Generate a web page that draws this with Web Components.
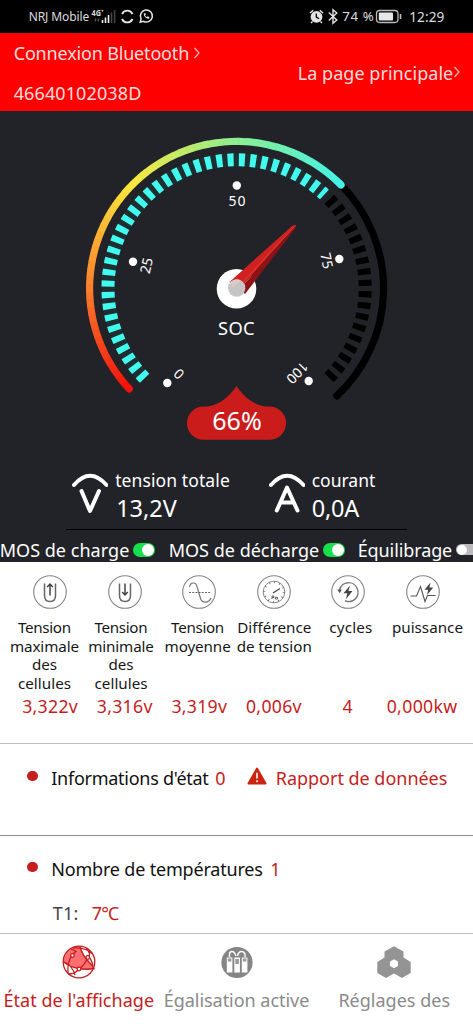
<!DOCTYPE html>
<html lang="fr">
<head>
<meta charset="utf-8">
<title>BMS</title>
<style>
html,body{margin:0;padding:0;background:#fff}
body{width:473px;height:1024px;overflow:hidden;font-family:"Noto Sans","Liberation Sans",sans-serif}
</style>
</head>
<body>
<bms-app></bms-app>
<script>
const define = (name, html, init) => {
  const tpl = document.createElement('template');
  tpl.innerHTML = html;
  customElements.define(name, class extends HTMLElement {
    connectedCallback() {
      if (this.shadowRoot) return;
      this.attachShadow({mode: 'open'}).appendChild(tpl.content.cloneNode(true));
      if (init) init(this, this.shadowRoot);
    }
  });
};

/* Single line of text, spaced to fill the width given in "w". */
define('fit-text', `<style>
:host{display:block;flex:none;white-space:nowrap;box-sizing:border-box;padding-left:.7px}
span{display:inline-block}
</style><span><slot></slot></span>`, (el, root) => {
  const w = +el.getAttribute('w'), s = +el.getAttribute('s') || 18;
  el.style.width = w + 'px';
  el.style.fontSize = s + 'px';
  const span = root.querySelector('span');
  const n = el.textContent.length;
  const natural = span.getBoundingClientRect().width;
  if (n > 1) span.style.letterSpacing = ((w - 1.4 - natural) / (n - 1)).toFixed(3) + 'px';
});

define('status-bar', `<style>
:host{display:flex;height:33px;box-sizing:border-box;background:#000;color:#ddd;align-items:center;padding:0 28px;line-height:33px}
svg{flex:none;display:block}
.sp{flex:1}
</style>
<fit-text w="62" s="12">NRJ Mobile</fit-text>
<svg width="66" height="33" viewBox="90 0 66 33">
 <text x="91.500" y="16" font-size="8" font-weight="700" fill="#ddd" textLength="12" lengthAdjust="spacingAndGlyphs">4G⁺</text>
 <path d="M95.500 18.500v3M98.500 18.500v3" stroke="#555" stroke-width="1.500"/>
 <path d="M102.500 20v3M105.500 17.500v5.500M108.500 15v8" stroke="#eee" stroke-width="1.600"/>
 <path d="M111.500 12.500v10.500M114.600 10v13" stroke="#444" stroke-width="1.600"/>
 <path d="M122 14a5.800 5.800 0 0 1 10.500 0M122 19a5.800 5.800 0 0 0 10.500 0" fill="none" stroke="#e4e4e4" stroke-width="1.900"/>
 <path d="M140.200 22.200l.9-3.300a6 6 0 1 1 2.400 2.400z" fill="none" stroke="#e4e4e4" stroke-width="1.500"/>
 <path d="M144.200 13.300c-1.800 1.500 2.200 6.400 4.900 5.400l.4-1.500-1.800-.9-.8.8q-1.300-.5-1.800-1.900l.7-.7-.6-1.600z" fill="#e4e4e4"/>
</svg>
<div class="sp"></div>
<svg width="33" height="33" viewBox="308.500 0 33 33">
 <path d="M309.500 13l3.200-2.800M322.500 13l-3.200-2.800M312 21.500l-1.500 1.500M320 21.500l1.500 1.500" stroke="#e4e4e4" stroke-width="1.500"/>
 <circle cx="316" cy="16.800" r="5.900" fill="#e4e4e4"/>
 <path d="M315.800 13.500v3.600l2.800 1.600" fill="none" stroke="#000" stroke-width="1.300"/>
 <path d="M328.300 12.500l8 7.500-3.800 3.200V9.800l3.800 3.200-8 7.500" fill="none" stroke="#e4e4e4" stroke-width="1.400"/>
</svg>
<fit-text w="33" s="13.200">74 %</fit-text>
<svg width="34" height="33" viewBox="375.500 0 34 33">
 <rect x="377" y="10.500" width="21.500" height="12" rx="3.200" fill="none" stroke="#bbb" stroke-width="1.300"/>
 <rect x="379.300" y="12.600" width="14.200" height="7.900" rx="1" fill="#e8e8e8"/>
 <path d="M401 14v5" stroke="#bbb" stroke-width="1.600"/>
</svg>
<fit-text w="36.500" s="13.600">12:29</fit-text>`);

define('chevron-icon', `<style>:host{display:block;flex:none;height:12px}svg{display:block}</style>
<svg width="8" height="12"><path d="M1.500 1l4.500 5-4.500 5" fill="none" stroke="#ffb4b4" stroke-width="1.300"/></svg>`);

define('page-header', `<style>
:host{display:flex;height:78px;background:#f00;color:#ffdede;justify-content:space-between;line-height:39px;padding:0 12px 0 13px}
.left{display:grid;grid-template-rows:41px 38px}
.row{display:flex;align-items:center}
.row chevron-icon{margin:-2px 0 0 3px}
</style>
<div class="left"><div class="row"><fit-text w="177">Connexion Bluetooth</fit-text><chevron-icon></chevron-icon></div>
<div class="row"><fit-text w="129">46640102038D</fit-text></div></div>
<div class="row" style="padding-top:2px"><fit-text w="157">La page principale</fit-text><chevron-icon style="margin-left:-1px"></chevron-icon></div>`);

define('soc-gauge', `<style>:host{display:block;height:350px}svg{display:block}text{fill:#fff;text-anchor:middle}</style>
<svg width="473" height="350" viewBox="0 111 473 350">
 <g id="arc" fill="none" stroke-width="7.200"></g>
 <g id="ticks" fill="none" stroke-width="13"></g>
 <g fill="#fff"><circle cx="167.300" cy="383" r="4.200"/><circle cx="133" cy="261.700" r="4.200"/><circle cx="236.800" cy="185.500" r="4.200"/><circle cx="339.300" cy="259" r="4.200"/><circle cx="308.700" cy="381" r="4.200"/></g>
 <g font-size="14">
 <text transform="translate(179 374) rotate(-135)" y="5">0</text>
 <text transform="translate(146.500 265.500) rotate(-77)" y="5">25</text>
 <text x="237" y="206" textLength="17">50</text>
 <text transform="translate(326.700 260.700) rotate(78)" y="5">75</text>
 <text transform="translate(297.300 372.900) rotate(135)" y="5">100</text></g>
 <circle cx="236.500" cy="288.800" r="19.800" fill="#fff"/>
 <path d="M229.500 282L291.500 226.500Q295 224 296 225L240 289z" fill="#d02020"/>
 <path d="M240 289L296 225Q296.500 226.500 294.500 229.500L245 294z" fill="#8e1216"/>
 <path d="M240 285L295.500 225.500" stroke="#e24a40" stroke-width=".8"/>
 <circle cx="236.700" cy="288" r="8.700" fill="#c6c4c4"/><path d="M229 284a8.700 8.700 0 0 1 12-3.500l-8 7z" fill="#e3cccc" opacity=".7"/>
 <text x="236.300" y="335.300" font-size="18.300" textLength="36.500">SOC</text>
 <path d="M203.500 439.800a16.600 16.600 0 0 1 0-33.200C218 407 230 396 236.500 386C243 396 255 407 269.500 406.600a16.600 16.600 0 0 1 0 33.200z" fill="#cb1c1c"/>
 <text x="237" y="430.300" font-size="25.500" textLength="49.500" lengthAdjust="spacingAndGlyphs">66%</text>
</svg>`, (el, root) => {
  const cx = 236.6, cy = 288.4, NS = 'http://www.w3.org/2000/svg';
  const pt = (a, r) => {
    const t = a * Math.PI / 180;
    return (cx + r * Math.sin(t)).toFixed(2) + ' ' + (cy - r * Math.cos(t)).toFixed(2);
  };
  const arc = (g, a, b, r, color, cap) => {
    const p = document.createElementNS(NS, 'path');
    p.setAttribute('d', `M${pt(a, r)}A${r} ${r} 0 ${b - a > 180 ? 1 : 0} 1 ${pt(b, r)}`);
    p.setAttribute('stroke', color);
    if (cap) p.setAttribute('stroke-linecap', 'round');
    g.appendChild(p);
  };
  const stops = [[0,[245,18,12]],[.24,[250,128,44]],[.49,[253,231,60]],[.745,[142,238,144]],[1,[69,243,230]]];
  const mix = t => {
    let i = 0;
    while (i < stops.length - 2 && t > stops[i + 1][0]) i++;
    const [t0, c0] = stops[i], [t1, c1] = stops[i + 1], k = (t - t0) / (t1 - t0);
    return `rgb(${c0.map((v, j) => Math.round(v + (c1[j] - v) * k))})`;
  };
  const g = root.getElementById('arc'), start = 226.9, end = 405.3, N = 60;
  arc(g, end, 497, 147, '#000', true);
  arc(g, start, start + .5, 147, mix(0), true);
  arc(g, end - .5, end, 147, mix(1), true);
  for (let i = 0; i < N; i++) {
    const step = (end - start) / N, a = start + i * step;
    arc(g, a, a + step + (i < N - 1 ? .2 : 0), 147, mix(i / (N - 1)));
  }
  const k = root.getElementById('ticks');
  arc(k, 225.6, 403.7, 128.4, '#202d31');
  for (let i = 0; i < 54; i++) {
    const a = 227 + i * 5.013;
    arc(k, a - 1.35, a + (i === 35 ? .6 : 1.35), 128.6, i < 36 ? '#40fbee' : '#000');
  }
});

define('toggle-switch', `<style>
:host{display:block;flex:none;width:22px;height:14px;border-radius:7px;background:#18df4c;box-sizing:border-box;padding:1px}
:host([off]){background:#bdb9bd;width:22px;height:11px;padding:.5px}
i{display:block;width:12px;height:12px;border-radius:50%;background:#fff;margin-left:auto}
:host([off]) i{margin-left:0;width:10px;height:10px}
</style><i></i>`);

define('live-reading', `<style>
:host{display:flex}
svg{display:block;flex:none}
.t{display:grid;grid-template-rows:24px 30px;margin:-1px 0 0 6.500px}
::slotted([slot=label]){line-height:24px}
::slotted([slot=value]){line-height:33px}
</style>
<svg width="37" height="46" viewBox="71 470 37 46"><g fill="none" stroke="#fff" stroke-width="4" stroke-linecap="round" stroke-linejoin="round"><path d="M74 486Q90 467.500 106.500 486"/><path id="l"/></g></svg>
<div class="t"><slot name="label"></slot><slot name="value"></slot></div>`, (el, root) => {
  root.getElementById('l').setAttribute('d', el.hasAttribute('amp')
    ? 'M79.800 511.500L90 488.500L100.500 511.500M84 503.500H96.500' : 'M81.500 492L90 512L99 492');
});

define('dash-panel', `<style>
:host{display:block;height:451px;background:#222328;color:#fff;overflow:hidden}
.r{display:flex;height:69px;box-sizing:border-box;margin:0 66px;width:341px;border-bottom:1.500px solid #000;padding:8px 0 0 5px;gap:0}
.m{display:flex;height:28px;align-items:center;width:500px;line-height:28px;padding-top:6px;box-sizing:content-box}
toggle-switch{margin:-1px 0 0 3px}
</style>
<soc-gauge></soc-gauge>
<div class="r">
<live-reading style="width:196.500px"><fit-text slot="label" w="116" s="17.500">tension totale</fit-text><fit-text slot="value" w="62" s="23.500" style="margin-left:1px">13,2V</fit-text></live-reading>
<live-reading amp><fit-text slot="label" w="65" s="17.500">courant</fit-text><fit-text slot="value" w="49" s="23.500">0,0A</fit-text></live-reading>
</div>
<div class="m">
<fit-text w="131" style="margin-left:-1px">MOS de charge</fit-text><toggle-switch></toggle-switch>
<fit-text w="152" style="margin-left:13px">MOS de décharge</fit-text><toggle-switch></toggle-switch>
<fit-text w="96" style="margin-left:12px">Équilibrage</fit-text><toggle-switch off></toggle-switch>
</div>`);

const METRIC_ICONS = {
  up: '<path d="M11.500 8.500v12q0 6 5.500 6t5.500-6v-12" stroke-width="1.500"/><path d="M17 20.500v-11m-2.800 2.500L17 9l2.800 3" stroke="#444" stroke-width="1.500"/>',
  down: '<path d="M11.500 8.500v12q0 6 5.500 6t5.500-6v-12" stroke-width="1.500"/><path d="M17 8.500v11m-2.800-2.500l2.800 3 2.800-3" stroke="#444" stroke-width="1.500"/>',
  wave: '<path d="M7.500 12c1-5.500 6.500-5 7.500-.5l3.500 12c1.500 5 8.500 5 10.500-.5" stroke="#777"/><path d="M7 17.500h22" stroke-dasharray="2 1.200" stroke-width=".9" stroke="#555"/>',
  gauge: '<circle cx="17" cy="17" r="10.800" stroke-width="1" stroke="#888"/><circle cx="17" cy="17" r="9.700" stroke-width="2" stroke-dasharray=".8 4.280"/><path d="M16 18l7-4.500" stroke="#444"/><path d="M15 21v3M15 21h2v1.500h-2M18.500 22.300h2v1.700h-2z" stroke-width=".8" stroke="#444"/>',
  cycle: '<path d="M8.500 15a9.300 9.300 0 0 1 17.900-1 9.300 9.300 0 0 1-10.900 12.300M15.500 26.200l-1.500-.4" stroke="#777" stroke-width="1.400"/><path d="M6.300 14.500h4.600l-2.200 3.800z" fill="#555" stroke="none"/><path d="M19 10.500l-6.500 7.800h3.800l-1.300 6 6.500-8.300h-4z" fill="#444" stroke="none"/>',
  pulse: '<path d="M4.500 21h6l4-9.500 4.500 15 2.500-6h8" stroke="#555" stroke-width="1.100"/><path d="M24.500 7.500l-6 7.300h3.600l-1 5.200 6.100-7.600h-3.800z" fill="#444" stroke="none"/>'
};
define('metric-icon', `<style>:host{display:block;flex:none;width:34px;height:34px}svg{display:block}</style>
<svg width="34" height="34" fill="none" stroke="#666"><circle cx="17" cy="17" r="16.300" stroke="#858585" stroke-width="1.100"/><g stroke-width="1.200"></g></svg>`,
(el, root) => { root.querySelector('g').innerHTML = METRIC_ICONS[el.getAttribute('kind')]; });

define('metric-label', `<style>:host{display:flex;flex-direction:column;align-items:center;width:76.600px;line-height:18.400px;color:#161616}</style><slot></slot>`);

define('metrics-panel', `<style>
:host{display:block;height:182px;border-bottom:1.500px solid #bdbdbd;box-sizing:border-box;padding-top:13px}
.icons{display:flex;gap:40.500px;padding-left:33px}
.labels{display:flex;padding:9.300px 0 0 6.200px;height:87px;box-sizing:border-box}
.values{display:flex;color:#c51d1d;line-height:20px;padding-left:21.500px;gap:17.600px}
</style>
<div class="icons"><metric-icon kind="up"></metric-icon><metric-icon kind="down"></metric-icon><metric-icon kind="wave"></metric-icon><metric-icon kind="gauge"></metric-icon><metric-icon kind="cycle"></metric-icon><metric-icon kind="pulse"></metric-icon></div>
<div class="labels">
<metric-label><fit-text s="15.200" w="54.500">Tension</fit-text><fit-text s="15.200" w="70.500">maximale</fit-text><fit-text s="15.200" w="26.500">des</fit-text><fit-text s="15.200" w="54.500">cellules</fit-text></metric-label>
<metric-label><fit-text s="15.200" w="54.500">Tension</fit-text><fit-text s="15.200" w="67">minimale</fit-text><fit-text s="15.200" w="26.500">des</fit-text><fit-text s="15.200" w="54.500">cellules</fit-text></metric-label>
<metric-label><fit-text s="15.200" w="54.500">Tension</fit-text><fit-text s="15.200" w="67.500">moyenne</fit-text></metric-label>
<metric-label><fit-text s="15.200" w="75.500">Différence</fit-text><fit-text s="15.200" w="76.500">de tension</fit-text></metric-label>
<metric-label><fit-text s="15.200" w="44.500">cycles</fit-text></metric-label>
<metric-label><fit-text s="15.200" w="72.500">puissance</fit-text></metric-label>
</div>
<div class="values"><fit-text w="57" s="17.700">3,322v</fit-text><fit-text w="57" s="17.700">3,316v</fit-text><fit-text w="57" s="17.700">3,319v</fit-text><fit-text w="57" s="17.700">0,006v</fit-text><fit-text w="11" s="17.700" style="margin-left:22px">4</fit-text><fit-text w="72" s="17.700" style="margin-left:15.500px">0,000kw</fit-text></div>`);

define('info-row', `<style>
:host{display:block;box-sizing:border-box;color:#111}
.r{display:flex;align-items:center;padding-left:27px;height:30px;line-height:30px}
i{width:10.600px;height:10.600px;border-radius:50%;background:#c61d1d;margin:-4px 13px 0 0}
</style><div class="r"><i></i><slot></slot></div><slot name="more"></slot>`);

define('warning-icon', `<style>:host{display:block;flex:none;margin:-4px 8px 0 20.500px}svg{display:block}</style>
<svg width="20" height="18"><path d="M10 1.500L18.500 16.500H1.500z" fill="#cb2312" stroke="#cb2312" stroke-width="2" stroke-linejoin="round"/><path d="M10 5.800v5.800M10 13.200v2" stroke="#ffe7e0" stroke-width="1.700"/></svg>`);

const TAB_ICONS = {
  globe: '<circle cx="17" cy="17" r="15.800" fill="#fff" stroke="none"/><path d="M2 14A15.800 15.800 0 0 1 18 1.200Q20 9 27 17 31 22 32 23.500 25 25 17 24 9 21 1.500 17z" fill="#ff6e70" stroke="none"/><circle cx="17" cy="17" r="15.800"/><path d="M11 3Q24 2 30.500 9M18 1.500Q20 10 27 17 30 20 32 23.500 25 25 17 23.500 8 22 1.500 17M24 3.500Q30 9 26 12 23 20 17 24 13 29 6 29M9 4L14 6.500 10 10Q5 18 6 28M2 17Q10 20 13 30M27 12q4 5 4 11" /><circle cx="10.500" cy="10.500" r="1.800" fill="#fff"/><circle cx="25.800" cy="12.500" r="1.800" fill="#fff"/><circle cx="17" cy="24" r="1.800" fill="#fff"/>',
  cells: '<circle cx="17" cy="17.500" r="15.600" fill="#858585" stroke="none"/><path d="M9.500 12V9.500Q9.500 6.500 12 6.500t4 4.500M17.500 11q1-4.500 4-4.500t3.500 3V12" stroke="#fff" stroke-width="1.400"/><g fill="#fff" stroke="none"><rect x="6.800" y="12.500" width="5.600" height="15"/><rect x="14.300" y="12.500" width="5.600" height="15"/><rect x="21.800" y="12.500" width="5.600" height="15"/></g><g fill="#999" stroke="none"><rect x="7.800" y="13.500" width="3.600" height="3"/><rect x="15.300" y="14" width="3.600" height="5"/><rect x="22.800" y="13.500" width="3.600" height="3"/></g>',
  hex: '<path d="M17 1.200L26.500 6.500V12.500L33.700 17V28L25 33 17 28.500 9 33 .3 28V17L7.500 12.500V6.500z" fill="#949494" stroke="none"/><path d="M17 14.300l4 2.300v4.500L17 23.300l-4-2.200v-4.500z" fill="#fff" stroke="none"/>'
};
define('tab-item', `<style>
:host{display:flex;flex-direction:column;align-items:center;flex:none;width:157.700px;color:#8a8a8a;line-height:26px}
:host([active]){color:#c51d1d}
svg{display:block;margin:11px 0 8px}
</style><svg width="34" height="34" fill="none" stroke="#c51d1d" stroke-width="1.300"></svg><slot></slot>`,
(el, root) => { root.querySelector('svg').innerHTML = TAB_ICONS[el.getAttribute('icon')]; });

define('bms-app', `<style>
:host{display:block;width:473px;height:1024px;overflow:hidden;background:#fff}
.red{color:#c51d1d}
.tabs{display:flex;height:92px;border-top:1.500px solid #bdbdbd}
.temp{display:flex;padding:13px 0 0 52px;line-height:32px}
</style>
<status-bar></status-bar>
<page-header></page-header>
<dash-panel></dash-panel>
<metrics-panel></metrics-panel>
<info-row style="height:92px;padding-top:19px;border-bottom:1px solid #8d8d8d"><fit-text w="159">Informations d'état</fit-text><fit-text w="12" class="red" style="margin-left:5px">0</fit-text><warning-icon></warning-icon><fit-text w="173" class="red">Rapport de données</fit-text></info-row>
<info-row style="height:97px;padding-top:18px"><fit-text w="213">Nombre de températures</fit-text><fit-text w="10" class="red" style="margin-left:6px">1</fit-text>
<div slot="more" class="temp"><fit-text w="27" style="color:#444">T1:</fit-text><fit-text w="29" class="red" style="margin-left:12px">7℃</fit-text></div></info-row>
<div class="tabs">
<tab-item icon="globe" active><fit-text w="152">État de l'affichage</fit-text></tab-item>
<tab-item icon="cells"><fit-text w="147">Égalisation active</fit-text></tab-item>
<tab-item icon="hex"><fit-text w="113">Réglages des</fit-text></tab-item>
</div>`);
</script>
</body>
</html>
